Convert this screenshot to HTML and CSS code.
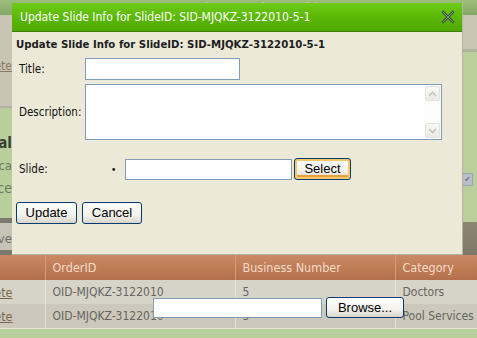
FILE: index.html
```html
<!DOCTYPE html>
<html>
<head>
<meta charset="utf-8">
<link rel="stylesheet" href="styles.css">
</head>
<body>
<div class="page">
  <div class="topstrip">
    <span class="top-bn">Business Number</span>
    <span class="top-sid">Slide ID</span>
  </div>
  <div class="middle">
    <div class="lstrip">
      <div class="l-gray"><a class="l-link">Delete</a></div>
      <div class="l-green">
        <b class="l-head">Total</b>
        <span class="l-t1">Loca</span>
        <span class="l-t2">Place</span>
      </div>
      <div class="l-bar"><span class="l-save">Save</span></div>
    </div>
    <div class="center"></div>
    <div class="rstrip">
      <div class="r-gray"></div>
      <div class="r-green"><span class="r-drop">&#10004;</span></div>
      <div class="r-brown"></div>
    </div>
  </div>
  <table class="grid">
    <colgroup><col class="c1"><col class="c2"><col class="c3"><col class="c4"></colgroup>
    <thead>
      <tr><th></th><th>OrderID</th><th>Business Number</th><th>Category</th></tr>
    </thead>
    <tbody>
      <tr class="r1"><td class="del"><a>Delete</a></td><td>OID-MJQKZ-3122010</td><td>5</td><td>Doctors</td></tr>
      <tr class="r2"><td class="del"><a>Delete</a></td><td>OID-MJQKZ-3122010</td><td>5</td><td>Pool Services</td></tr>
    </tbody>
  </table>
  <div class="footbar"></div>

  <div class="fileinput">
    <span class="filebox"></span>
    <button class="xpbtn browse">Browse...</button>
  </div>

  <div class="dialog">
    <div class="titlebar">
      <span class="title">Update Slide Info for SlideID: SID-MJQKZ-3122010-5-1</span>
      <svg class="close" width="14" height="14" viewBox="0 0 14 14">
        <path d="M2 2 L12 12 M12 2 L2 12" stroke="#3f5a3a" stroke-width="2.6" stroke-linecap="round"/>
        <path d="M2 2 L12 12 M12 2 L2 12" stroke="#7d8f80" stroke-width="1" stroke-linecap="round"/>
      </svg>
    </div>
    <div class="dbody">
      <div class="heading">Update Slide Info for SlideID: SID-MJQKZ-3122010-5-1</div>
      <div class="form">
        <label class="lbl">Title:</label>
        <div class="field"><span class="textbox tb-title"></span></div>
        <label class="lbl">Description:</label>
        <div class="field">
          <div class="textarea">
            <div class="ta-area"></div>
            <div class="scroll">
              <span class="sbtn"><svg width="9" height="6" viewBox="0 0 9 6"><path d="M1 5 L4.5 1.5 L8 5" fill="none" stroke="#c3c3bb" stroke-width="1.6"/></svg></span>
              <span class="strack"></span>
              <span class="sbtn"><svg width="9" height="6" viewBox="0 0 9 6"><path d="M1 1 L4.5 4.5 L8 1" fill="none" stroke="#c3c3bb" stroke-width="1.6"/></svg></span>
            </div>
          </div>
        </div>
        <label class="lbl lbl-slide">Slide:</label>
        <div class="field slide-field">
          <span class="bullet">&bull;</span>
          <span class="textbox tb-slide"></span>
          <button class="xpbtn select">Select</button>
        </div>
      </div>
      <div class="actions">
        <button class="xpbtn act">Update</button>
        <button class="xpbtn act">Cancel</button>
      </div>
    </div>
  </div>
</div>
</body>
</html>
```
FILE: styles.css
```css
* { box-sizing: border-box; }
html, body { margin: 0; padding: 0; }
body {
  width: 477px;
  height: 338px;
  overflow: hidden;
  font-family: "DejaVu Sans Condensed", "DejaVu Sans", sans-serif;
  background: #c8c5b5;
}
.page {
  position: relative;
  width: 477px;
  height: 338px;
  display: flex;
  flex-direction: column;
}
.topstrip {
  height: 15px;
  background: linear-gradient(#9dbe7c, #86a866);
  font-size: 12px;
  color: #c9d8b6;
  display: flex;
  gap: 18px;
  padding-left: 185px;
  padding-top: 1px;
  line-height: 14px;
  white-space: nowrap;
}
.middle {
  height: 240px;
  display: flex;
}
.lstrip {
  width: 12px;
  display: flex;
  flex-direction: column;
  overflow: hidden;
  white-space: nowrap;
  font-size: 13px;
}
.l-gray {
  height: 93px;
  background: #c8c5b5;
  border-bottom: 2px solid #b3b0a2;
  display: flex;
  align-items: center;
  justify-content: flex-end;
  padding-top: 10px;
}
.l-link { color: #8d7862; text-decoration: underline; font-size: 12px; }
.l-green {
  height: 110px;
  background: #b8cf9b;
  display: flex;
  flex-direction: column;
  align-items: flex-end;
  padding-top: 26px;
  color: #6a7a5e;
}
.l-head { color: #3a3f33; font-size: 15px; line-height: 18px; }
.l-t1 { line-height: 24px; font-size: 13px; margin-top: 2px; }
.l-t2 { line-height: 20px; font-size: 14px; }
.l-bar {
  height: 37px;
  background: #c6c3b8;
  border-top: 5px solid #7b7970;
  border-bottom: 5px solid #7b7970;
  display: flex;
  align-items: center;
  justify-content: flex-end;
  color: #6d6d68;
  font-size: 13px;
  padding-top: 3px;
}
.center { flex: 1; background: #c8c5b5; }
.rstrip {
  width: 15px;
  display: flex;
  flex-direction: column;
}
.r-gray {
  height: 37px;
  background: #c9c6b4;
  border-bottom: 3px solid #aeb59a;
}
.r-green {
  height: 170px;
  background: #b9d09d;
  padding-top: 121px;
}
.r-drop {
  display: block;
  width: 11px;
  height: 13px;
  background: #b9bfc8;
  border: 1px solid #9da4ae;
  color: #6e737c;
  font-size: 8px;
  line-height: 11px;
  text-align: center;
}
.r-brown {
  flex: 1;
  background: linear-gradient(#8d8574, #7f7868);
}

.grid {
  border-collapse: collapse;
  table-layout: fixed;
  width: 477px;
  font-size: 12px;
  color: #66665f;
}
.c1 { width: 45px; }
.c2 { width: 190px; }
.c3 { width: 160px; }
.grid th {
  height: 25px;
  background: linear-gradient(#c98a63, #b46f49);
  color: #f4dccb;
  font-weight: normal;
  font-size: 12.5px;
  text-align: left;
  padding: 0 0 0 7px;
  border-left: 1px solid #d59d7c;
  white-space: nowrap;
}
.grid th:first-child { border-left: none; }
.grid td {
  height: 24px;
  padding: 0 0 0 7px;
  border-left: 1px solid #e6e2d8;
  white-space: nowrap;
  overflow: hidden;
}
.grid td:first-child { border-left: none; }
.grid td.del { text-align: right; padding: 0 32px 0 0; direction: rtl; }
.grid td.del a { color: #7a644f; text-decoration: underline; direction: ltr; font-size: 12.5px; }
.r1 td { background: #d6d3c8; }
.r2 td { background: #ccc8bc; }
.footbar { flex: 1; background: #b8cf9b; border-top: 1px solid #e6e2d8; }

.fileinput {
  position: absolute;
  left: 153px;
  top: 297px;
  display: flex;
  gap: 4px;
  align-items: center;
}
.filebox {
  width: 169px;
  height: 20px;
  background: #fff;
  border: 1px solid #7f9db9;
}

.xpbtn {
  font-family: "Liberation Sans", Arial, sans-serif;
  font-size: 13px;
  color: #000;
  border: 1px solid #003c74;
  border-radius: 3px;
  background: linear-gradient(#ffffff, #f3f2ec 60%, #d8d4c8);
  padding: 0;
  height: 21px;
  line-height: 18px;
}
.browse { width: 78px; }

.dialog {
  position: absolute;
  left: 12px;
  top: 3px;
  width: 450px;
  height: 251px;
  background: #ece9d8;
  display: flex;
  flex-direction: column;
  box-shadow: 1px 1px 0 #b5b2a3;
}
.titlebar {
  height: 29px;
  background: linear-gradient(#6fcb17, #5bb805 50%, #50a903);
  border-bottom: 1px solid #3f7d06;
  display: flex;
  align-items: center;
  padding: 0 7px 0 8px;
}
.title {
  flex: 1;
  color: #fff;
  font-size: 12px;
  white-space: nowrap;
}
.close { display: block; }
.dbody {
  flex: 1;
  padding: 4px 0 0 4px;
}
.heading {
  font-weight: bold;
  font-size: 11.3px;
  color: #1d1d1d;
  height: 17px;
  line-height: 17px;
  white-space: nowrap;
}
.form {
  display: grid;
  grid-template-columns: 66px auto;
  align-items: center;
  margin-top: 5px;
  margin-left: 3px;
  row-gap: 4px;
  font-size: 11.5px;
  color: #111;
}
.lbl { white-space: nowrap; }
.field { display: flex; align-items: center; }
.textbox {
  display: block;
  background: #fff;
  border: 1px solid #7f9db9;
  height: 22px;
}
.tb-title { width: 155px; }
.textarea {
  width: 357px;
  height: 56px;
  border: 1px solid #7f9db9;
  background: #fff;
  display: flex;
}
.ta-area { flex: 1; }
.scroll {
  width: 17px;
  display: flex;
  flex-direction: column;
  background: #fcfcfa;
  padding: 1px;
}
.sbtn {
  height: 15px;
  background: linear-gradient(#f8f8f5, #ecebe5);
  border: 1px solid #e4e3dc;
  border-radius: 2px;
  display: flex;
  align-items: center;
  justify-content: center;
}
.strack { flex: 1; }
.lbl-slide { margin-top: 14px; }
.slide-field { margin-top: 14px; }
.bullet { width: 40px; padding-left: 26px; font-size: 10px; }
.tb-slide { width: 167px; height: 21px; }
.select {
  width: 57px;
  height: 22px;
  margin-left: 2px;
  box-shadow: inset 0 0 0 2px #f8c768, inset 0 -2px 0 2px #e5a13c;
}
.actions {
  display: flex;
  gap: 5px;
  margin-top: 22px;
}
.act { width: 61px; height: 22px; }
.act + .act { width: 60px; }
```
